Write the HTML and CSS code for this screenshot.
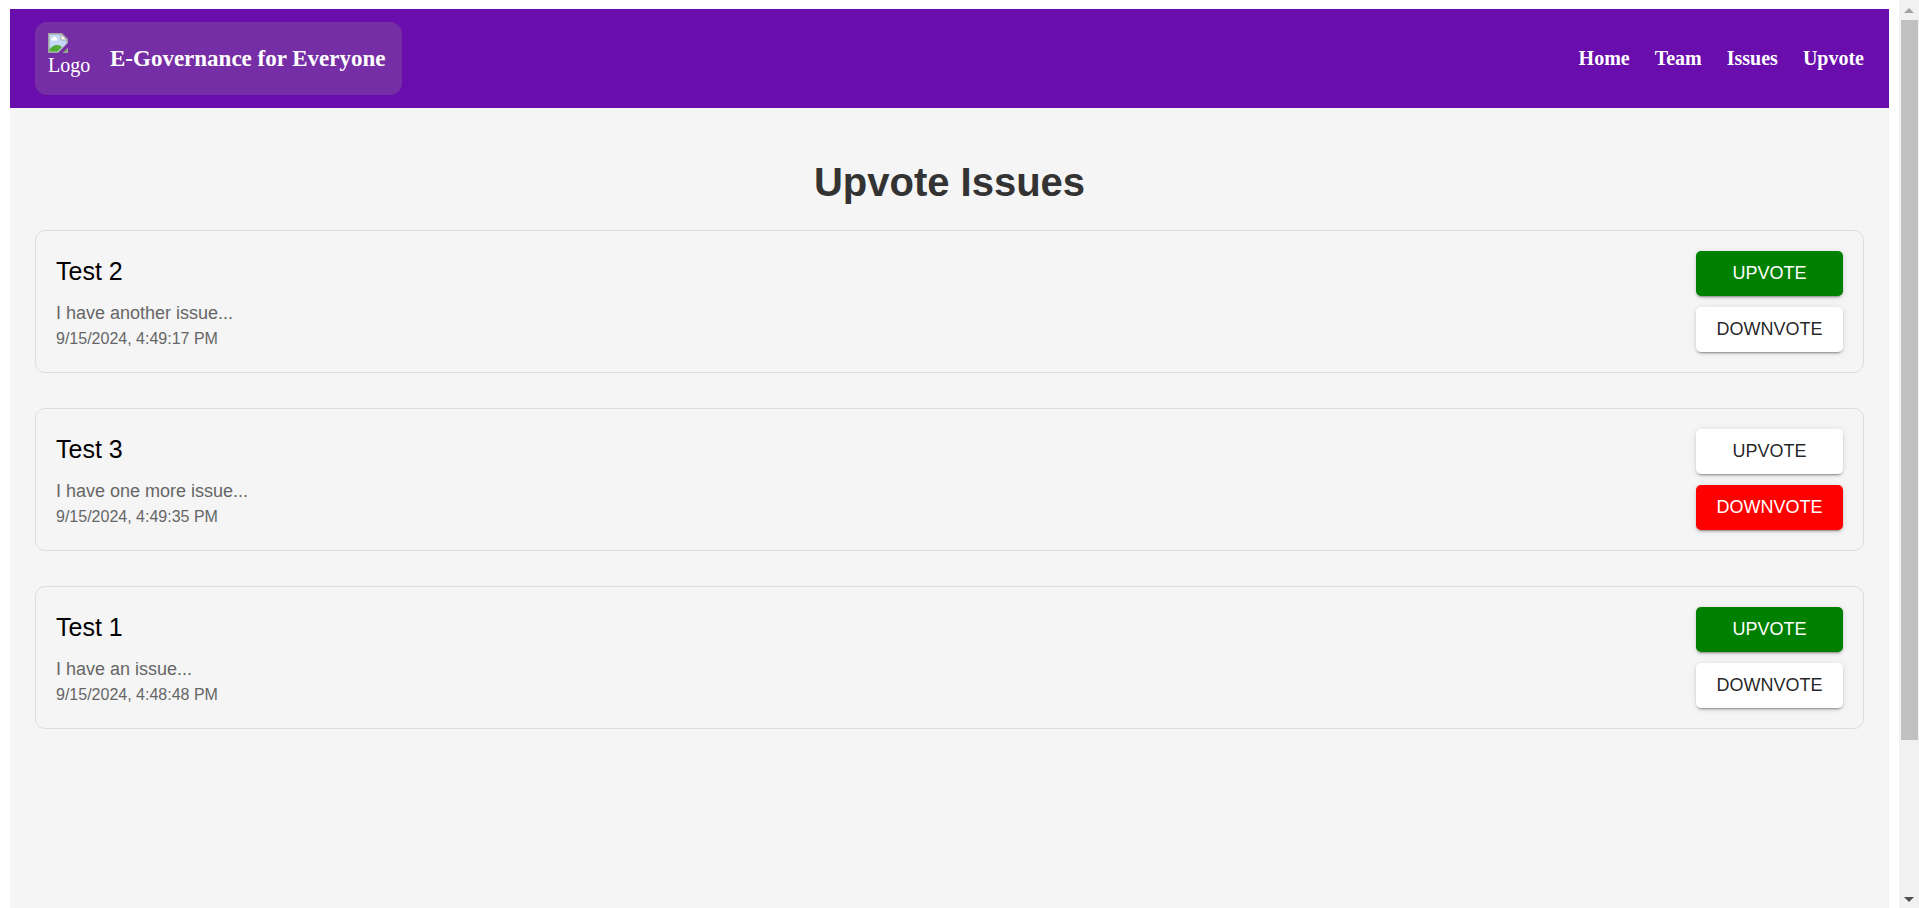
FILE: index.html
```html
<!DOCTYPE html>
<html lang="en">
<head>
<meta charset="utf-8">
<title>Upvote Issues</title>
<link rel="stylesheet" href="styles.css">
</head>
<body class="window">
<div class="page">
  <header class="navbar">
    <div class="brand">
      <div class="brand-logo">
        <svg class="brand-icon" viewBox="0 0 20 20" aria-hidden="true">
          <path d="M0 0h14l6 6v4L10 20H0z" fill="#a3a3a3"/>
          <path d="M1.500 1.500h11.500v5.500h5.500v3.500l-8 8h-9z" fill="#c3d9f7"/>
          <path d="M13 1v6h6z" fill="#fff" stroke="#a3a3a3"/>
          <path d="M3 7.500a1.500 1.500 0 0 1 1.500-2a2 2 0 0 1 4 0a1.500 1.500 0 0 1 1 2z" fill="#fff"/>
          <path d="M1.500 18.500v-2q3-4.500 7.500-4.500q3 0 5 2l-4.500 4.500z" fill="#54ab35"/>
          <path d="M20 14.500V20h-5.500z" fill="#a3a3a3"/>
          <path d="M18.500 16v2.500H16z" fill="#54ab35"/>
        </svg>
        <span>Logo</span>
      </div>
      <h3 class="brand-title">E-Governance for Everyone</h3>
    </div>
    <nav class="nav-links">
      <a href="#home">Home</a>
      <a href="#team">Team</a>
      <a href="#issues">Issues</a>
      <a href="#upvote">Upvote</a>
    </nav>
  </header>
  <main class="content">
    <h1 class="heading">Upvote Issues</h1>
    <div class="issues">
      <article class="card">
        <div>
          <h2 class="card-title">Test 2</h2>
          <p class="card-text">I have another issue...</p>
          <time class="card-time">9/15/2024, 4:49:17 PM</time>
        </div>
        <div class="votes">
          <button class="vote vote-up" type="button">UPVOTE</button>
          <button class="vote" type="button">DOWNVOTE</button>
        </div>
      </article>
      <article class="card">
        <div>
          <h2 class="card-title">Test 3</h2>
          <p class="card-text">I have one more issue...</p>
          <time class="card-time">9/15/2024, 4:49:35 PM</time>
        </div>
        <div class="votes">
          <button class="vote" type="button">UPVOTE</button>
          <button class="vote vote-down" type="button">DOWNVOTE</button>
        </div>
      </article>
      <article class="card">
        <div>
          <h2 class="card-title">Test 1</h2>
          <p class="card-text">I have an issue...</p>
          <time class="card-time">9/15/2024, 4:48:48 PM</time>
        </div>
        <div class="votes">
          <button class="vote vote-up" type="button">UPVOTE</button>
          <button class="vote" type="button">DOWNVOTE</button>
        </div>
      </article>
    </div>
  </main>
</div>
<div class="scrollbar" aria-hidden="true">
  <svg class="arrow" viewBox="0 0 20 20"><path d="M5 13L10 8l5 5z" fill="#a3a3a3"/></svg>
  <div class="track"><div class="thumb"></div></div>
  <svg class="arrow" viewBox="0 0 20 20"><path d="M5 9h10l-5 5z" fill="#505050"/></svg>
</div>
</body>
</html>
```
FILE: styles.css
```css
* { box-sizing: border-box; }

.window {
  display: flex;
  min-height: 100vh;
  margin: 0;
  background: #fff;
  font-family: "Liberation Sans", Arial, sans-serif;
}

.page {
  display: flex;
  flex: 1;
  flex-direction: column;
  padding: 9px 10px 0;
}

.navbar {
  display: flex;
  align-items: center;
  justify-content: space-between;
  padding: 13px 25px;
  background: #6a0dad;
  color: #fff;
  font-family: "Liberation Serif", "Times New Roman", serif;
  font-size: 20px;
}

.brand {
  display: flex;
  align-items: center;
  gap: 12px;
  padding: 11px 16px 11px 13px;
  border-radius: 12px;
  background: #762ea6;
}

.brand-logo {
  display: flex;
  flex-direction: column;
  width: 50px;
  min-height: 51px;
  line-height: 24px;
}

.brand-icon { width: 20px; height: 20px; }

.brand-title { margin: 0; font-size: 23px; line-height: 28px; }

.nav-links { display: flex; gap: 25px; }

.nav-links a { color: #fff; font-weight: bold; text-decoration: none; }

.content { flex: 1; padding: 49px 25px; background: #f5f5f5; }

.heading {
  margin: 0 0 23px;
  color: #333;
  font-size: 40px;
  line-height: 50px;
  text-align: center;
}

.issues { display: grid; gap: 35px; }

.card {
  display: flex;
  justify-content: space-between;
  padding: 20px;
  border: 1px solid #ddd;
  border-radius: 10px;
}

.card-title {
  margin: 0 0 10px;
  color: #000;
  font-size: 25px;
  font-weight: normal;
  line-height: 40px;
}

.card-text { margin: 0; color: #666; font-size: 18px; line-height: 25px; }

.card-time { display: block; color: #666; font-size: 16px; line-height: 25px; }

.votes {
  display: flex;
  flex-direction: column;
  gap: 11px;
  min-width: 147px;
}

.vote {
  padding: 12px 20px;
  border: 0;
  border-radius: 5px;
  background: #fff;
  box-shadow: 0 4px 1px -3px rgba(0, 0, 0, 0.2), 0 2px 2px rgba(0, 0, 0, 0.14), 0 1px 6px rgba(0, 0, 0, 0.12);
  color: rgba(0, 0, 0, 0.87);
  font-family: inherit;
  font-size: 18px;
  line-height: 21px;
}

.vote-up { background: green; color: #fff; }

.vote-down { background: red; color: #fff; }

.scrollbar {
  position: sticky;
  top: 0;
  display: flex;
  flex-direction: column;
  width: 20px;
  height: 100vh;
  background: #f1f1f1;
}

.arrow { width: 20px; height: 20px; }

.track { flex: 1; padding: 0 1px 0 2px; }

.thumb { height: 83%; background: #c1c1c1; }
```
